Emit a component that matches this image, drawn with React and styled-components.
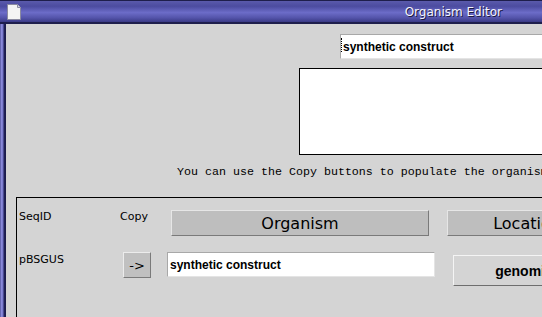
import React from "react";
import styled, { createGlobalStyle } from "styled-components";

const GlobalStyle = createGlobalStyle`
  html, body {
    margin: 0;
    padding: 0;
    overflow: hidden;
    background: #d4d4d4;
  }
`;

const Window = styled.div`
  width: 542px;
  height: 317px;
  display: flex;
  flex-direction: column;
  overflow: hidden;
  background: #d4d4d4;
`;

const TitleBar = styled.div`
  height: 24px;
  box-sizing: border-box;
  display: flex;
  align-items: center;
  justify-content: space-between;
  padding: 0 40px 0 7px;
  border-top: 1px solid #1e1e4c;
  border-bottom: 2px solid #1e1e4c;
  background: linear-gradient(
    to bottom,
    #5a5aac 0%,
    #4c4ca0 25%,
    #6c6cc8 55%,
    #5454aa 80%,
    #3a3a86 100%
  );
`;

const Title = styled.span`
  font-family: "DejaVu Sans", sans-serif;
  font-size: 12px;
  color: #f4f4ff;
  text-shadow: 1px 1px 0 #1a1a40;
`;

const Body = styled.div`
  flex: 1;
  display: flex;
  min-height: 0;
`;

const LeftFrame = styled.div`
  width: 6px;
  flex-shrink: 0;
  background: linear-gradient(
    to right,
    #3a3a80 0px,
    #9090e0 1px,
    #7474c8 3px,
    #22225a 4px,
    #1a1a48 6px
  );
`;

const Content = styled.div`
  flex: 1;
  overflow: hidden;
  display: flex;
  flex-direction: column;
  align-items: flex-start;
`;

const TextField = styled.div`
  box-sizing: border-box;
  flex-shrink: 0;
  width: ${(p) => p.width}px;
  height: 25px;
  margin-left: ${(p) => p.left || 0}px;
  margin-top: ${(p) => p.top || 0}px;
  padding-left: ${(p) => (p.caret ? 0 : 2)}px;
  display: flex;
  align-items: center;
  background: #fff;
  border-top: 1px solid #a8a8a8;
  border-left: 1px solid #a8a8a8;
  border-bottom: 1px solid #e4e4e4;
  border-right: 1px solid #e4e4e4;
  font-family: "Liberation Sans", Arial, sans-serif;
  font-weight: bold;
  font-size: 12px;
  color: #000;
  white-space: nowrap;
`;

const Caret = styled.span`
  width: 0;
  height: 14px;
  margin-top: -4px;
  border-left: 1px dotted #000;
  margin-right: 1px;
`;

const Notes = styled.div`
  box-sizing: border-box;
  width: 300px;
  height: 87px;
  margin: 9px 0 0 293px;
  background: #fff;
  border: 1px solid #000;
  flex-shrink: 0;
`;

const Help = styled.div`
  margin: 10px 0 0 171px;
  font-family: "Liberation Mono", monospace;
  font-size: 11.67px;
  line-height: 14px;
  color: #000;
  white-space: nowrap;
`;

const Section = styled.div`
  box-sizing: border-box;
  width: 700px;
  height: 200px;
  margin: 18px 0 0 10px;
  padding: 12px 0 0 2px;
  border-top: 1px solid #000;
  border-left: 1px solid #000;
  display: flex;
  flex-direction: column;
  gap: 16px;
  flex-shrink: 0;
`;

const Row = styled.div`
  display: flex;
  align-items: flex-start;
`;

const Label = styled.span`
  flex-shrink: 0;
  width: ${(p) => p.width}px;
  margin-top: ${(p) => p.top || 0}px;
  font-family: "DejaVu Sans", sans-serif;
  font-size: 11px;
  line-height: 13px;
  color: #000;
`;

const HeadButton = styled.div`
  box-sizing: border-box;
  flex-shrink: 0;
  width: ${(p) => p.width}px;
  height: 26px;
  margin-left: ${(p) => p.gap || 0}px;
  display: flex;
  align-items: center;
  justify-content: center;
  background: #bebebe;
  border-top: 1px solid #e6e6e6;
  border-left: 1px solid #e6e6e6;
  border-bottom: 1px solid #7a7a7a;
  border-right: 1px solid #7a7a7a;
  font-family: "DejaVu Sans", sans-serif;
  font-size: 16px;
  color: #000;
`;

const ArrowButton = styled.div`
  box-sizing: border-box;
  flex-shrink: 0;
  width: 28px;
  height: 26px;
  display: flex;
  align-items: center;
  justify-content: center;
  background: #c0c0c0;
  border-top: 1px solid #ececec;
  border-left: 1px solid #ececec;
  border-bottom: 1px solid #7a7a7a;
  border-right: 1px solid #7a7a7a;
  font-family: "DejaVu Sans", sans-serif;
  font-size: 13px;
  color: #000;
`;

const PlainButton = styled.div`
  box-sizing: border-box;
  flex-shrink: 0;
  width: 142px;
  height: 31px;
  margin: 3px 0 0 18px;
  display: flex;
  align-items: center;
  justify-content: center;
  background: #d4d4d4;
  border-top: 1px solid #f4f4f4;
  border-left: 1px solid #f4f4f4;
  border-bottom: 1px solid #6e6e6e;
  border-right: 1px solid #6e6e6e;
  font-family: "Liberation Sans", Arial, sans-serif;
  font-weight: bold;
  font-size: 14px;
  color: #000;
`;

const PageIcon = () => (
  <svg width="14" height="16" viewBox="0 0 14 16">
    <path d="M0.5 0.5 H10.5 L13.5 3.5 V15.5 H0.5 Z" fill="#f4f4f4" stroke="#8a8aa0" />
    <path d="M10.5 0.5 V3.5 H13.5" fill="#d8d8e4" stroke="#8a8aa0" />
  </svg>
);

export default function App() {
  return (
    <>
      <GlobalStyle />
      <Window>
        <TitleBar>
          <PageIcon />
          <Title>Organism Editor</Title>
        </TitleBar>
        <Body>
          <LeftFrame />
          <Content>
            <TextField width={260} left={334} top={10} caret>
              <Caret />
              synthetic construct
            </TextField>
            <Notes />
            <Help>You can use the Copy buttons to populate the organism fields.</Help>
            <Section>
              <Row>
                <Label width={101}>SeqID</Label>
                <Label width={51}>Copy</Label>
                <HeadButton width={258}>Organism</HeadButton>
                <HeadButton width={160} gap={18}>Location</HeadButton>
              </Row>
              <Row>
                <Label width={104} top={1}>pBSGUS</Label>
                <ArrowButton>-&gt;</ArrowButton>
                <TextField width={268} left={16}>
                  synthetic construct
                </TextField>
                <PlainButton>genomic</PlainButton>
              </Row>
            </Section>
          </Content>
        </Body>
      </Window>
    </>
  );
}
